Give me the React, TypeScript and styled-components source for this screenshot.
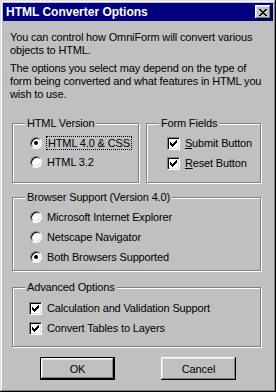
import React from 'react';
import styled, { createGlobalStyle } from 'styled-components';

const Global = createGlobalStyle`
  html, body { margin: 0; padding: 0; background: #c0c0c0; }
  body { font-family: "Liberation Sans", Arial, sans-serif; }
`;

const Window = styled.div`
  box-sizing: border-box;
  width: 276px;
  height: 392px;
  background: #c0c0c0;
  padding: 3px;
  box-shadow: inset -1px -1px #000, inset 1px 1px #dfdfdf, inset -2px -2px #808080, inset 2px 2px #fff;
  display: flex;
  flex-direction: column;
  font-size: 11px;
  letter-spacing: -0.15px;
  color: #000;
`;

const TitleBar = styled.div`
  height: 18px;
  flex: none;
  background: #000080;
  display: flex;
  align-items: center;
  justify-content: space-between;
  padding: 0 2px 0 3px;
  color: #fff;
  font-weight: bold;
  font-size: 12px;
  letter-spacing: 0;
`;

const CloseButton = styled.div`
  width: 16px;
  height: 14px;
  background: #c0c0c0;
  box-shadow: inset -1px -1px #000, inset 1px 1px #fff, inset -2px -2px #808080, inset 2px 2px #dfdfdf;
  display: flex;
  align-items: center;
  justify-content: center;
`;

const Body = styled.div`
  display: flex;
  flex-direction: column;
  padding: 10px 11px 0 9px;
`;

const Intro = styled.p<{ $top: number }>`
  margin: ${p => p.$top}px 0 0 -2px;
  line-height: 13px;
  white-space: nowrap;
`;

const GroupRow = styled.div`
  display: flex;
  gap: 6px;
  margin-top: 16px;
`;

const Group = styled.fieldset<{ $width?: number; $top?: number; $pl: number; $pt: number; $pb: number }>`
  box-sizing: border-box;
  ${p => (p.$width ? `width: ${p.$width}px;` : 'align-self: stretch;')}
  margin: ${p => p.$top ?? 0}px 1px 0 0;
  padding: ${p => p.$pt}px 0 ${p => p.$pb}px ${p => p.$pl}px;
  border: 1px solid #808080;
  box-shadow: inset 1px 1px #fff, 1px 1px #fff;
  min-width: 0;
`;

const Legend = styled.legend`
  padding: 0 2px;
  margin-left: 6px;
  line-height: 13px;
  background: #c0c0c0;
`;

const OptionList = styled.div<{ $indent: number }>`
  display: flex;
  flex-direction: column;
  padding-left: ${p => p.$indent}px;
`;

const Option = styled.label<{ $h: number }>`
  display: flex;
  align-items: center;
  height: ${p => p.$h}px;
  gap: 5px;
  white-space: nowrap;
`;

const Radio = styled.span<{ $on?: boolean }>`
  box-sizing: border-box;
  width: 12px;
  height: 12px;
  border-radius: 50%;
  border: 1px solid;
  border-color: #808080 #fff #fff #808080;
  box-shadow: inset 1px 1px #000, inset -1px -1px #dfdfdf;
  background: #fff;
  position: relative;
  flex: none;
  &::after {
    content: '';
    display: ${p => (p.$on ? 'block' : 'none')};
    position: absolute;
    left: 3px;
    top: 3px;
    width: 4px;
    height: 4px;
    border-radius: 50%;
    background: #000;
  }
`;

const Check = styled.span`
  box-sizing: border-box;
  width: 13px;
  height: 13px;
  border: 1px solid;
  border-color: #808080 #fff #fff #808080;
  box-shadow: inset 1px 1px #000, inset -1px -1px #dfdfdf;
  background: #fff;
  flex: none;
  display: flex;
  align-items: center;
  justify-content: center;
`;

const Focus = styled.span`
  outline: 1px dotted #000;
  outline-offset: 0;
  padding: 0 1px;
  line-height: 12px;
`;

const ButtonRow = styled.div`
  display: flex;
  justify-content: center;
  gap: 46px;
  margin-top: 10px;
  margin-left: 2px;
`;

const Button = styled.div<{ $default?: boolean }>`
  box-sizing: border-box;
  width: 75px;
  height: 23px;
  display: flex;
  align-items: center;
  justify-content: center;
  background: #c0c0c0;
  border: ${p => (p.$default ? '1px solid #000' : '0')};
  box-shadow: inset -1px -1px #000, inset 1px 1px #fff, inset -2px -2px #808080, inset 2px 2px #dfdfdf;
`;

const checkPixels = [
  [6, 0], [5, 1], [6, 1], [0, 2], [4, 2], [5, 2], [6, 2],
  [0, 3], [1, 3], [3, 3], [4, 3], [5, 3],
  [0, 4], [1, 4], [2, 4], [3, 4], [4, 4],
  [1, 5], [2, 5], [3, 5], [2, 6],
];

const CheckMark = () => (
  <svg width="7" height="7" viewBox="0 0 7 7" shapeRendering="crispEdges">
    {checkPixels.map(([x, y]) => (
      <rect key={`${x}-${y}`} x={x} y={y} width="1" height="1" fill="#000" />
    ))}
  </svg>
);

const xPixels = [
  [0, 0], [1, 0], [6, 0], [7, 0],
  [1, 1], [2, 1], [5, 1], [6, 1],
  [2, 2], [3, 2], [4, 2], [5, 2],
  [3, 3], [4, 3],
  [2, 4], [3, 4], [4, 4], [5, 4],
  [1, 5], [2, 5], [5, 5], [6, 5],
  [0, 6], [1, 6], [6, 6], [7, 6],
];

const CloseGlyph = () => (
  <svg width="8" height="7" viewBox="0 0 8 7" shapeRendering="crispEdges">
    {xPixels.map(([x, y]) => (
      <rect key={`${x}-${y}`} x={x} y={y} width="1" height="1" fill="#000" />
    ))}
  </svg>
);

export default function App() {
  return (
    <>
      <Global />
      <Window>
        <TitleBar>
          <span>HTML Converter Options</span>
          <CloseButton>
            <CloseGlyph />
          </CloseButton>
        </TitleBar>
        <Body>
          <Intro $top={0}>
            You can control how OmniForm will convert various
            <br />
            objects to HTML.
          </Intro>
          <Intro $top={5}>
            The options you select may depend on the type of
            <br />
            form being converted and what features in HTML you
            <br />
            wish to use.
          </Intro>
          <GroupRow>
            <Group $width={129} $pl={6} $pt={3} $pb={9}>
              <Legend>HTML Version</Legend>
              <OptionList $indent={11}>
                <Option $h={19}>
                  <Radio $on />
                  <Focus>HTML 4.0 &amp; CSS</Focus>
                </Option>
                <Option $h={19}>
                  <Radio />
                  <span>HTML 3.2</span>
                </Option>
              </OptionList>
            </Group>
            <Group $width={117} $pl={6} $pt={3} $pb={9}>
              <Legend>Form Fields</Legend>
              <OptionList $indent={14}>
                <Option $h={20}>
                  <Check><CheckMark /></Check>
                  <span><u>S</u>ubmit Button</span>
                </Option>
                <Option $h={20}>
                  <Check><CheckMark /></Check>
                  <span><u>R</u>eset Button</span>
                </Option>
              </OptionList>
            </Group>
          </GroupRow>
          <Group $top={8} $pl={6} $pt={3} $pb={3}>
            <Legend>Browser Support (Version 4.0)</Legend>
            <OptionList $indent={11}>
              <Option $h={20}>
                <Radio />
                <span>Microsoft Internet Explorer</span>
              </Option>
              <Option $h={20}>
                <Radio />
                <span>Netscape Navigator</span>
              </Option>
              <Option $h={20}>
                <Radio $on />
                <span>Both Browsers Supported</span>
              </Option>
            </OptionList>
          </Group>
          <Group $top={10} $pl={6} $pt={4} $pb={8}>
            <Legend>Advanced Options</Legend>
            <OptionList $indent={10}>
              <Option $h={20}>
                <Check><CheckMark /></Check>
                <span>Calculation and Validation Support</span>
              </Option>
              <Option $h={20}>
                <Check><CheckMark /></Check>
                <span>Convert Tables to Layers</span>
              </Option>
            </OptionList>
          </Group>
          <ButtonRow>
            <Button $default>OK</Button>
            <Button>Cancel</Button>
          </ButtonRow>
        </Body>
      </Window>
    </>
  );
}
